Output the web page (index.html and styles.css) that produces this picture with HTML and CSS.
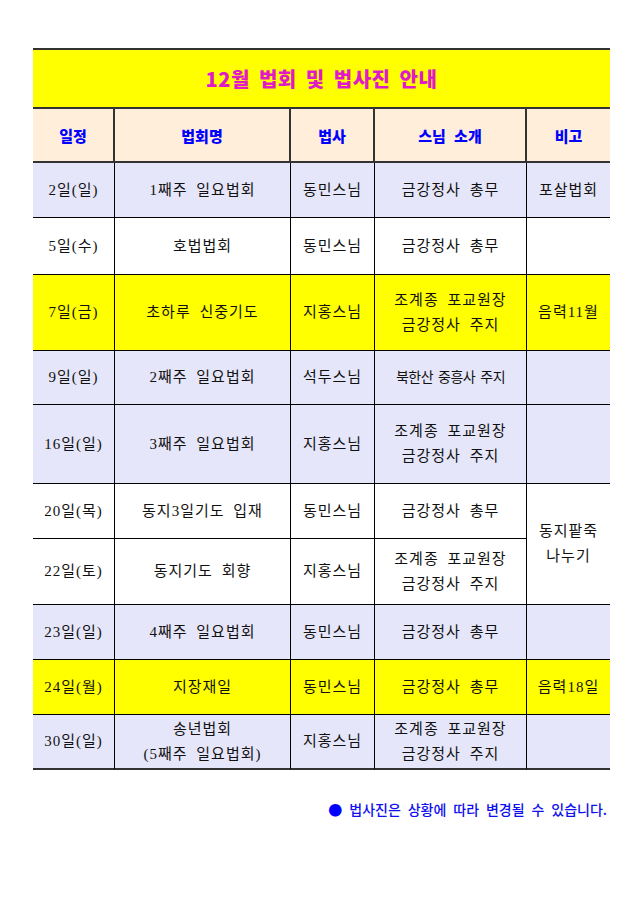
FILE: index.html
```html
<!DOCTYPE html>
<html lang="ko">
<head>
<meta charset="utf-8">
<title>12월 법회 및 법사진 안내</title>
<link rel="stylesheet" href="styles.css">
</head>
<body>
<div class="page">
  <div class="sheet">
    <div class="cell title">12월 법회 및 법사진 안내</div>

    <div class="cell head">일정</div>
    <div class="cell head">법회명</div>
    <div class="cell head">법사</div>
    <div class="cell head">스님 소개</div>
    <div class="cell head last">비고</div>

    <div class="cell lav">2일(일)</div>
    <div class="cell lav">1째주 일요법회</div>
    <div class="cell lav">동민스님</div>
    <div class="cell lav">금강정사 총무</div>
    <div class="cell lav last">포살법회</div>

    <div class="cell wht">5일(수)</div>
    <div class="cell wht">호법법회</div>
    <div class="cell wht">동민스님</div>
    <div class="cell wht">금강정사 총무</div>
    <div class="cell wht last"></div>

    <div class="cell yel">7일(금)</div>
    <div class="cell yel">초하루 신중기도</div>
    <div class="cell yel">지홍스님</div>
    <div class="cell yel">조계종 포교원장<br>금강정사 주지</div>
    <div class="cell yel last">음력11월</div>

    <div class="cell lav">9일(일)</div>
    <div class="cell lav">2째주 일요법회</div>
    <div class="cell lav">석두스님</div>
    <div class="cell lav tight">북한산 중흥사 주지</div>
    <div class="cell lav last"></div>

    <div class="cell lav">16일(일)</div>
    <div class="cell lav">3째주 일요법회</div>
    <div class="cell lav">지홍스님</div>
    <div class="cell lav">조계종 포교원장<br>금강정사 주지</div>
    <div class="cell lav last"></div>

    <div class="cell wht">20일(목)</div>
    <div class="cell wht">동지3일기도 입재</div>
    <div class="cell wht">동민스님</div>
    <div class="cell wht">금강정사 총무</div>
    <div class="cell wht last span2">동지팥죽<br>나누기</div>

    <div class="cell wht">22일(토)</div>
    <div class="cell wht">동지기도 회향</div>
    <div class="cell wht">지홍스님</div>
    <div class="cell wht">조계종 포교원장<br>금강정사 주지</div>

    <div class="cell lav">23일(일)</div>
    <div class="cell lav">4째주 일요법회</div>
    <div class="cell lav">동민스님</div>
    <div class="cell lav">금강정사 총무</div>
    <div class="cell lav last"></div>

    <div class="cell yel">24일(월)</div>
    <div class="cell yel">지장재일</div>
    <div class="cell yel">동민스님</div>
    <div class="cell yel">금강정사 총무</div>
    <div class="cell yel last">음력18일</div>

    <div class="cell lav end">30일(일)</div>
    <div class="cell lav end">송년법회<br>(5째주 일요법회)</div>
    <div class="cell lav end">지홍스님</div>
    <div class="cell lav end">조계종 포교원장<br>금강정사 주지</div>
    <div class="cell lav end last"></div>
  </div>
  <p class="note"><span class="dot">●</span> 법사진은 상황에 따라 변경될 수 있습니다.</p>
</div>
</body>
</html>
```

FILE: styles.css
```css
html, body {
  margin: 0;
  padding: 0;
  background: #ffffff;
}

.page {
  padding: 48px 0 0 33px;
  width: 577px;
}

.sheet {
  display: grid;
  grid-template-columns: 82px 176px 84px 152px 83px;
  grid-template-rows: 59px 54px 55px 57px 76px 54px 79px 55px 66px 55px 55px 55px;
  border-top: 2px solid #333333;
  font-family: "Liberation Serif", "Noto Sans CJK KR", serif;
  font-size: 15px;
  color: #111111;
}

.cell {
  display: flex;
  align-items: center;
  justify-content: center;
  text-align: center;
  line-height: 25px;
  letter-spacing: 1px;
  word-spacing: 4px;
  border-bottom: 1px solid #000000;
  border-right: 1px solid #000000;
  box-sizing: border-box;
}

.cell.last {
  border-right: none;
}

.cell.tight {
  font-size: 14px;
  letter-spacing: -0.5px;
  word-spacing: 2px;
}

.title {
  grid-column: 1 / 6;
  background: #ffff00;
  color: #e01ac8;
  font-family: "Noto Sans CJK KR", sans-serif;
  font-weight: 900;
  font-size: 20px;
  letter-spacing: 0.5px;
  word-spacing: 3px;
  border-right: none;
  border-bottom: 2px solid #333333;
}

.head {
  background: #ffeeda;
  color: #0000ff;
  font-family: "Noto Sans CJK KR", sans-serif;
  font-weight: 900;
  font-size: 15px;
  letter-spacing: 0;
  border-bottom: 2px solid #333333;
  border-right: 2px solid #333333;
}

.head.last {
  border-right: none;
}

.lav {
  background: #e6e6fa;
}

.wht {
  background: #ffffff;
}

.yel {
  background: #ffff00;
}

.span2 {
  grid-row: span 2;
}

.end {
  border-bottom: 2px solid #333333;
}

.note {
  margin: 29px 0 0 0;
  padding-right: 3px;
  text-align: right;
  font-family: "Noto Sans CJK KR", sans-serif;
  font-weight: 500;
  font-size: 14px;
  word-spacing: 3px;
  color: #1010ee;
  line-height: 20px;
}

.dot {
  color: #0000ff;
}
```
